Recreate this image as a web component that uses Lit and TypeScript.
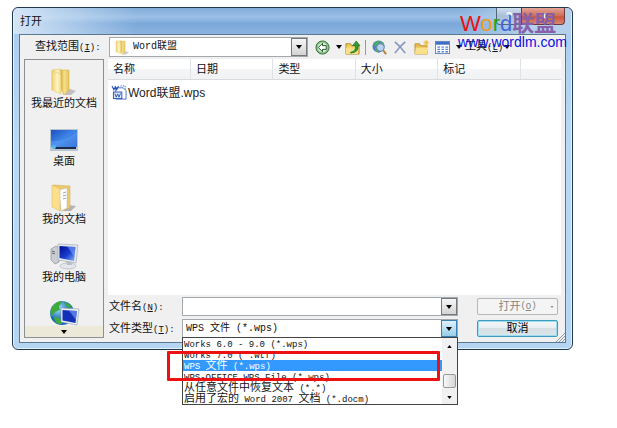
import { LitElement, html, css, svg } from "lit";
import { customElement, state } from "lit/decorators.js";

/** Splits a label into CJK and Latin runs so each gets its own font size. */
const mix = (text: string) =>
  text
    .split(/([\u4e00-\u9fff]+)/)
    .filter(Boolean)
    .map((run) => (/[\u4e00-\u9fff]/.test(run) ? run : html`<span class="latin">${run}</span>`));

const caret = html`<svg class="caret" viewBox="0 0 6 4" aria-hidden="true"><path d="M0 0h6L3 4z" /></svg>`;

const folder = svg`
  <defs>
    <linearGradient id="f1" x1="0" x2="1"><stop offset="0" stop-color="#d9b23f"/><stop offset=".4" stop-color="#f6e08a"/><stop offset="1" stop-color="#e6c45a"/></linearGradient>
    <linearGradient id="f2" x1="0" x2="1"><stop offset="0" stop-color="#f0d272"/><stop offset=".6" stop-color="#fdf4c4"/><stop offset="1" stop-color="#f3db86"/></linearGradient>
  </defs>
  <path d="M17 20l9 3-5 4h-8z" fill="#000" opacity=".2"/>
  <path d="M2 2l9-1v19l-9 2z" fill="url(#f2)" stroke="#d9bb5c" stroke-width=".5"/>
  <path d="M11 2h8v20l-5 5-3-6z" fill="url(#f1)" stroke="#cfae4c" stroke-width=".5"/>
  <path d="M2 3l9 3v20l-9-4z" fill="url(#f2)" stroke="#dcc068" stroke-width=".5"/>`;

const icons: Record<string, unknown> = {
  recent: html`<svg viewBox="0 0 28 28">${folder}</svg>`,
  desktop: html`<svg viewBox="0 0 28 28">
    <defs><linearGradient id="d" x1="0" y1="0" x2="1" y2="1"><stop offset="0" stop-color="#1c4fc0"/><stop offset=".5" stop-color="#3f86e8"/><stop offset="1" stop-color="#1d56c4"/></linearGradient></defs>
    <rect x="0" y="3" width="28" height="22" fill="#b9c4d2"/>
    <rect x="1" y="4" width="26" height="17" fill="url(#d)"/>
    <path d="M1 15Q15 16 27 6v15H1z" fill="#6fb0ff" opacity=".35"/>
    <rect x="5" y="21" width="21" height="2" fill="#1b2c48"/>
    <circle cx="4" cy="21" r="2" fill="#57b7ea"/>
  </svg>`,
  docs: html`<svg viewBox="0 0 28 28">
    <path d="M18 21l8 1-5 5h-8z" fill="#000" opacity=".25"/>
    <path d="M3 1l17 1v22l-9 3z" fill="#eccb6c" stroke="#cfa94a" stroke-width=".5"/>
    <path d="M9 6l8-2v20l-6 3z" fill="#fff" stroke="#b8b8b8" stroke-width=".5"/>
    <path d="M13 9l3-1M13 12l3-1M13 15l3-1" stroke="#7f93ac" stroke-width=".8"/>
    <path d="M2 1l8 4v22l-8-4z" fill="#fbdf8c" stroke="#d9b658" stroke-width=".5"/>
  </svg>`,
  computer: html`<svg viewBox="0 0 28 28">
    <defs><linearGradient id="c" x1="0" x2="1" y2="1"><stop offset="0" stop-color="#000b8c"/><stop offset=".55" stop-color="#1a3fd0"/><stop offset="1" stop-color="#8ab8ff"/></linearGradient></defs>
    <path d="M1 7l5-3 3 2v14l-4 2-4-4z" fill="#c9ced4" stroke="#7d858f" stroke-width=".6"/>
    <path d="M2 9l3 1M2 11l3 1" stroke="#555" stroke-width=".8"/>
    <ellipse cx="18" cy="24" rx="8" ry="3" fill="#e4e8ec" stroke="#a4acb5" stroke-width=".6"/>
    <path d="M16 18h5l1 5h-5z" fill="#b9c0c8"/>
    <path d="M8 2l20 1-2 18-18-3z" fill="#e5e9ee" stroke="#9aa3ad" stroke-width=".6"/>
    <path d="M9.500 4l16 1-1.500 14-14.500-3z" fill="url(#c)"/>
    <path d="M17 4l8.500 1-1 10z" fill="#8fb4ff" opacity=".5"/>
  </svg>`,
  network: html`<svg viewBox="0 0 28 28">
    <defs><radialGradient id="n" cx=".35" cy=".3"><stop offset="0" stop-color="#a6e4ff"/><stop offset="1" stop-color="#1767b4"/></radialGradient></defs>
    <circle cx="12" cy="13" r="12" fill="url(#n)"/>
    <path d="M2 7Q6 1 12 1q-1 4-3 5l1 4-5 2-3 4Q-1 12 2 7zM4 17l6 1 2 6-4 0Q4 21 4 17zM14 2q6 1 8 6l-5-1z" fill="#3faa3c"/>
    <path d="M11 8l18 1-2 16-16-3z" fill="#eef1f5" stroke="#8f99a6" stroke-width=".6"/>
    <path d="M12.500 10l14.500 1-1.500 12-13-2.500z" fill="#1231b8"/>
    <path d="M19 10.500l8 .5-1 9z" fill="#7fa8ff" opacity=".6"/>
  </svg>`,
};

const tools = {
  back: html`<svg viewBox="0 0 16 16"><circle cx="8" cy="8" r="7" fill="#8cc487" stroke="#2f6b36"/><circle cx="8" cy="8" r="5" fill="#dff3da"/><path d="M3.500 8L8 3.500V6h4v4H8v2.500z" fill="#fff" stroke="#174a22"/></svg>`,
  up: html`<svg viewBox="0 0 16 16"><path d="M1 4h5l1 2h8v9H1z" fill="#f2cf5c" stroke="#a5842a"/><path d="M1 8h13v7H1z" fill="#f9df86"/><path d="M6 13q6-1 5-7H8l4-5 4 5h-2q1 7-8 8z" fill="#2e9c34" stroke="#176a20" stroke-width=".6"/></svg>`,
  search: html`<svg viewBox="0 0 16 16"><circle cx="7" cy="7" r="6.500" fill="#4b84c8"/><path d="M2 4q3-4 6-3L6 5 3 7zM9 1q4 2 4 5l-3-1zM3 9l4 1-1 3q-3-1-3-4z" fill="#4fae58"/><circle cx="9" cy="8" r="4" fill="#cfe6f7" fill-opacity=".8" stroke="#6d87a3"/><path d="M12 11l3 4" stroke="#b3813c" stroke-width="2"/></svg>`,
  remove: html`<svg viewBox="0 0 16 16"><path d="M2 2q6 5 11 12M13 2Q7 7 2 14" fill="none" stroke="#8593c0" stroke-width="1.700"/></svg>`,
  create: html`<svg viewBox="0 0 16 16"><path d="M1 4h5l1 2h7v9H1z" fill="#e5b94a" stroke="#b58b2c" stroke-width=".8"/><path d="M2 8h13l-1 7H1z" fill="#fbe08a"/><path d="M13 0v6M10 3h6M11 1l4 4M15 1l-4 4" stroke="#f0b020" stroke-width=".9"/></svg>`,
  view: html`<svg viewBox="0 0 16 16"><rect x=".5" y="1.500" width="15" height="13" fill="#fff" stroke="#5f83c0"/><path d="M1 2h14v3H1z" fill="#3e6fc4"/><path d="M2.500 7.500h3m1.500 0h2.500m1.500 0h3M2.500 10h3m1.500 0h2.500m1.500 0h3M2.500 12.500h3m1.500 0h2.500m1.500 0h3" stroke="#5d86ca" stroke-width="1.400"/></svg>`,
};

@customElement("app-root")
export class AppRoot extends LitElement {
  @state() private selected = 2;

  private places = [
    ["recent", "我最近的文档"],
    ["desktop", "桌面"],
    ["docs", "我的文档"],
    ["computer", "我的电脑"],
    ["network", ""],
  ];

  private types = [
    "Works 6.0 - 9.0 (*.wps)",
    "Works 7.0 (*.wtf)",
    "WPS 文件 (*.wps)",
    "WPS-OFFICE WPS File (*.wps)",
    "从任意文件中恢复文本 (*.*)",
    "启用了宏的 Word 2007 文档 (*.docm)",
  ];

  static styles = css`
    :host {
      display: block;
      min-height: 100vh;
      box-sizing: border-box;
      padding: 7px 44px 22px 12px;
      background: #fff;
      color: #111;
      font: 11px/14px "Liberation Sans", "Noto Sans CJK SC", sans-serif;
    }
    * { box-sizing: border-box; }
    svg { display: block; flex: none; overflow: visible; }
    button, select, input { font: inherit; color: inherit; margin: 0; padding: 0; }
    .latin { font-family: "Liberation Mono", monospace; font-size: 9px; }
    .window {
      position: relative;
      border: 1px solid #22384e;
      border-radius: 6px;
      padding: 0 6px 6px;
      background: linear-gradient(#a9cbee, #b9d8f4 40%, #b5d5f3);
      box-shadow: inset 0 0 0 1px #e2f1fc;
    }
    .titlebar {
      height: 26px;
      margin: 0 -5px;
      padding: 0 6px;
      display: flex;
      align-items: center;
      border-radius: 5px 5px 0 0;
      background:
        linear-gradient(90deg, #d3e5f6 0, #b9d3ed00 22%, #b9d3ed00 80%, #b4d0ea 92%),
        linear-gradient(#82acd9, #9cc0e6 35%, #7ba8da 60%, #8cb3df);
    }
    h1 { flex: 1; margin: 0; font: inherit; }
    .caption { align-self: flex-start; display: flex; height: 17px; }
    .caption button {
      border: 1px solid #53677c;
      border-top: 0;
      background: linear-gradient(#cfdeed, #a9bfd6 50%, #b9cde0);
      color: #fff;
      width: 26px;
      line-height: 14px;
      font-weight: bold;
      border-radius: 0 0 0 4px;
    }
    .caption .close {
      width: 44px;
      margin-left: -1px;
      border-color: #6c3a3c;
      border-radius: 0 0 4px 0;
      background: linear-gradient(#e4a597, #cd6b58 50%, #c9553f 55%, #d98873);
    }
    .client { border: 1px solid #5b7891; background: #f0f0f0; padding: 0 4px 4px; }
    .toolbar { display: flex; align-items: center; height: 24px; padding-left: 11px; }
    .toolbar > label { width: 74px; white-space: nowrap; }
    .combo { position: relative; display: flex; align-items: center; border: 1px solid #a3a8ad; background: #fff; }
    .combo select, .combo input {
      flex: 1;
      min-width: 0;
      height: 100%;
      border: 0;
      outline: 0;
      appearance: none;
      background: none;
      font: 10px/14px "Liberation Mono", "Noto Sans CJK SC", monospace;
      padding: 0 3px;
    }
    .lookin { flex: 0 1 199px; height: 20px; padding-left: 5px; }
    .lookin > svg { width: 15px; height: 15px; }
    .arrow {
      align-self: stretch;
      width: 16px;
      display: flex;
      align-items: center;
      justify-content: center;
      border: 1px solid #74797e;
      background: linear-gradient(#f6f6f6, #d4d4d4);
    }
    .arrow.hot { border-color: #3c7fb1; background: linear-gradient(#dff2fc, #98cdea); }
    .caret { width: 6px; height: 4px; fill: #000; }
    .tools { flex: none; display: flex; align-items: center; padding-left: 7px; }
    .tools button { border: 0; background: none; display: flex; align-items: center; gap: 1px; white-space: nowrap; }
    .tools .pic { width: 21px; }
    .tools .pic svg { width: 15px; height: 15px; }
    .tools .drop { width: 9px; }
    .tools i { width: 1px; height: 15px; background: #7ba0cc; margin: 0 6px 0 -1px; }
    .body { display: flex; gap: 4px; }
    .places {
      flex: none;
      width: 80px;
      border: 1px solid #8b8f94;
      display: flex;
      flex-direction: column;
      padding-top: 8px;
    }
    .place {
      height: 58px;
      border: 0;
      background: none;
      display: flex;
      flex-direction: column;
      align-items: center;
      white-space: nowrap;
    }
    .place svg { width: 28px; height: 28px; }
    .place:nth-child(5) { height: 25px; }
    .more {
      margin-top: auto;
      height: 11px;
      border: 0;
      background: #ece9d8;
      display: flex;
      align-items: center;
      justify-content: center;
    }
    .main { flex: 1; min-width: 0; display: flex; flex-direction: column; }
    .list { height: 236px; background: #fff; }
    table { border-collapse: collapse; table-layout: fixed; width: 100%; }
    th {
      height: 20px;
      padding: 0 0 0 5px;
      text-align: left;
      font-weight: normal;
      background: linear-gradient(#fff, #fff 50%, #f4f5f6 50%, #f1f2f4);
      border-right: 1px solid #dfe3e8;
      border-bottom: 1px solid #d9dbde;
    }
    th:last-child { border-right: 0; width: 9%; }
    td { padding: 4px 0 0 4px; }
    .file { display: flex; align-items: center; gap: 1px; font: 12px/18px "Liberation Sans", "Noto Sans CJK SC", sans-serif; color: #222; text-decoration: none; }
    .file svg { width: 15px; height: 15px; }
    .form { display: grid; grid-template-columns: 74px minmax(0, 1fr) 100px; row-gap: 3px; padding: 2px 3px 0 0; align-items: center; }
    .form label { white-space: nowrap; padding-left: 1px; }
    .form .combo { height: 19px; }
    .form > button {
      margin-left: 19px;
      height: 17px;
      line-height: 13px;
      border: 1px solid #b4b8bb;
      border-radius: 2px;
      background: #f4f4f4;
      color: #838383;
    }
    .form .cancel { color: #000; border-color: #3c9cc0; background: linear-gradient(#f2f6f8, #e8eef1 50%, #d6dfe4 50%, #dbe6ec); box-shadow: inset 0 0 0 1px #9fdcf2; }
    .open { display: flex; align-items: center; justify-content: center; position: relative; }
    .open .caret { width: 4px; height: 2px; fill: #888; position: absolute; right: 3px; }
    .popup {
      position: absolute;
      z-index: 2;
      top: 100%;
      left: -1px;
      right: -1px;
      display: flex;
      border: 1px solid #444;
      background: #fff;
    }
    ul { flex: 1; min-width: 0; margin: 0; padding: 0; list-style: none; }
    li { height: 11px; line-height: 11px; padding-left: 1px; white-space: nowrap; }
    li[aria-selected="true"] { background: #3399ff; color: #fff; }
    .scroll { width: 15px; background: #f1f1f1; display: flex; flex-direction: column; align-items: center; padding: 7px 0 5px; }
    .scroll .caret { width: 5px; height: 3px; }
    .scroll .up { transform: rotate(180deg); }
    .thumb { width: 13px; height: 14px; margin: 26px 0 auto; border: 1px solid #999; border-radius: 2px; background: linear-gradient(90deg, #f8f8f8, #d6d6d6); }
    .mark { position: absolute; z-index: 3; top: 13px; left: -16px; right: 17px; height: 30px; border: 3px solid #ee1111; border-radius: 1px; pointer-events: none; }
    .grip { position: absolute; right: 7px; bottom: 7px; width: 9px; height: 9px; }
    .brand { position: absolute; z-index: 4; top: 5px; right: 5px; width: 109px; white-space: nowrap; color: #0a10e0; font-size: 14px; line-height: 14px; pointer-events: none; }
    .brand b { display: block; padding-left: 2px; font-weight: normal; font-size: 22px; line-height: 22px; color: #8660a8; }
    .brand em { font-style: normal; font-weight: bold; }
    .w { color: #ee1111; }
    .o { color: #f09a1c; }
    .r { color: #18a818; }
    .d { color: #4466d8; }
  `;

  render() {
    return html`
      <main class="window">
        <header class="titlebar">
          <h1>打开</h1>
          <div class="caption">
            <button aria-label="帮助">?</button>
            <button class="close" aria-label="关闭">✕</button>
          </div>
        </header>
        <div class="client">
          <div class="toolbar">
            <label for="look">查找范围${mix("(")}<u>${mix("I")}</u>${mix("):")}</label>
            <div class="combo lookin">
              <svg viewBox="0 0 28 28">${folder}</svg>
              <select id="look"><option>Word联盟</option></select>
              <span class="arrow">${caret}</span>
            </div>
            <div class="tools">
              <button class="pic" aria-label="后退">${tools.back}</button>
              <button class="drop" aria-label="历史">${caret}</button>
              <button class="pic" aria-label="向上">${tools.up}</button>
              <i></i>
              <button class="pic" aria-label="搜索">${tools.search}</button>
              <button class="pic" aria-label="删除">${tools.remove}</button>
              <button class="pic" aria-label="新建文件夹">${tools.create}</button>
              <button class="pic" aria-label="视图">${tools.view}</button>
              <button class="drop" aria-label="视图选项">${caret}</button>
              <button><span>工具${mix("(")}<u>${mix("L")}</u>${mix(")")}</span>${caret}</button>
            </div>
          </div>
          <div class="body">
            <nav class="places">
              ${this.places.map(([icon, name]) => html`<button class="place" aria-label=${name || "网络"}>${icons[icon]}<span>${name}</span></button>`)}
              <button class="more" aria-label="更多">${caret}</button>
            </nav>
            <section class="main">
              <div class="list">
                <table>
                  <thead>
                    <tr>${["名称", "日期", "类型", "大小", "标记", ""].map((h) => html`<th>${h}</th>`)}</tr>
                  </thead>
                  <tbody>
                    <tr>
                      <td colspan="6">
                        <a class="file" href="#">
                          <svg viewBox="0 0 16 16"><path d="M4 3h8l3 3v9H4z" fill="#fff" stroke="#4a74c0"/><path d="M0 1l2 4 1.500-3L5 5l2-4" fill="none" stroke="#2450b8" stroke-width="1.200"/><path d="M9 1h5v4" fill="none" stroke="#4a74c0" stroke-dasharray="1.500 1"/><rect x="1.500" y="7.500" width="9" height="7" fill="#e4edfb" stroke="#2450b8"/><path d="M3 9l1.500 4L6 9.500 7.500 13 9 9" fill="none" stroke="#2450b8"/></svg>
                          <span>Word联盟.wps</span>
                        </a>
                      </td>
                    </tr>
                  </tbody>
                </table>
              </div>
              <div class="form">
                <label for="name">文件名${mix("(")}<u>${mix("N")}</u>${mix("):")}</label>
                <div class="combo"><input id="name" type="text" /><span class="arrow">${caret}</span></div>
                <button class="open" disabled>打开${mix("(")}<u>${mix("O")}</u>${mix(")")}${caret}</button>
                <label for="type">文件类型${mix("(")}<u>${mix("T")}</u>${mix("):")}</label>
                <div class="combo">
                  <select id="type"><option>WPS 文件 (*.wps)</option></select>
                  <span class="arrow hot">${caret}</span>
                  <div class="popup">
                    <ul role="listbox" aria-label="文件类型">
                      ${this.types.map((t, i) => html`<li role="option" aria-selected=${i === this.selected} @click=${() => (this.selected = i)}>${mix(t)}</li>`)}
                    </ul>
                    <div class="scroll">
                      <svg class="caret up" viewBox="0 0 6 4"><path d="M0 0h6L3 4z" /></svg>
                      <span class="thumb"></span>
                      ${caret}
                    </div>
                    <div class="mark"></div>
                  </div>
                </div>
                <button class="cancel">取消</button>
              </div>
            </section>
          </div>
        </div>
        <svg class="grip" viewBox="0 0 9 9"><path d="M0 9L9 0M3 9l6-6M6 9l3-3" stroke="#8c98a4" /></svg>
        <div class="brand">
          <b><span class="w">W</span><span class="o">o</span><span class="r">r</span><span class="d">d</span><em>联盟</em></b>
          www.wordlm.com
        </div>
      </main>
    `;
  }
}
